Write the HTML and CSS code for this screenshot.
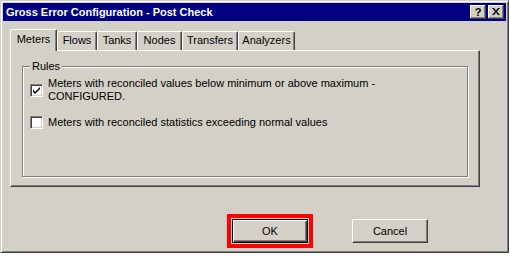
FILE: index.html
```html
<!DOCTYPE html>
<html>
<head>
<meta charset="utf-8">
<link rel="stylesheet" href="styles.css">
</head>
<body>
<div class="window">
  <div class="titlebar">
    <span class="title">Gross Error Configuration - Post Check</span>
    <div class="tbtns">
      <span class="tbtn help">?</span>
      <span class="tbtn close"><svg width="8" height="7" viewBox="0 0 8 7"><path d="M0 0h2l2 2.5L6 0h2L5 3.5 8 7H6L4 4.5 2 7H0l3-3.5z" fill="#000"/></svg></span>
    </div>
  </div>
  <div class="content">
    <div class="tabs">
      <div class="tab sel w-meters">Meters</div>
      <div class="tab w-flows">Flows</div>
      <div class="tab w-tanks">Tanks</div>
      <div class="tab w-nodes">Nodes</div>
      <div class="tab w-transfers">Transfers</div>
      <div class="tab w-analyzers">Analyzers</div>
    </div>
    <div class="panel">
      <div class="group">
        <span class="legend">Rules</span>
        <div class="row row1">
          <span class="cb"><svg width="7" height="7" viewBox="0 0 7 7"><path d="M0 2v3l2 2L7 2V-0L2 5z" fill="#000"/></svg></span>
          <span class="lbl">Meters with reconciled values below minimum or above maximum -<br>CONFIGURED.</span>
        </div>
        <div class="row row2">
          <span class="cb"></span>
          <span class="lbl">Meters with reconciled statistics exceeding normal values</span>
        </div>
      </div>
    </div>
    <div class="buttons">
      <div class="focus"><button class="btn default">OK</button></div>
      <button class="btn">Cancel</button>
    </div>
  </div>
</div>
</body>
</html>
```
FILE: styles.css
```css
html, body {
  margin: 0;
  padding: 0;
  background: #ffffff;
}
body {
  font-family: "Liberation Sans", Arial, sans-serif;
  font-size: 11px;
  color: #000;
}
.window {
  width: 509px;
  height: 253px;
  box-sizing: border-box;
  background: #d4d0c8;
  border: 1px solid;
  border-color: #d4d0c8 #404040 #404040 #d4d0c8;
  box-shadow: inset 1px 1px #ffffff, inset -1px -1px #808080;
  padding: 2px;
  display: flex;
  flex-direction: column;
}
.titlebar {
  height: 18px;
  background: #000080;
  display: flex;
  align-items: center;
  justify-content: space-between;
}
.title {
  color: #fff;
  font-weight: bold;
  font-size: 11px;
  padding-left: 3px;
  line-height: 18px;
}
.tbtns {
  display: flex;
  gap: 2px;
  padding-right: 2px;
}
.tbtn {
  width: 16px;
  height: 14px;
  box-sizing: border-box;
  background: #d4d0c8;
  box-shadow: inset -1px -1px #404040, inset 1px 1px #ffffff, inset -2px -2px #808080;
  display: flex;
  align-items: center;
  justify-content: center;
  font-weight: bold;
  font-size: 11px;
  line-height: 14px;
}
.help {
  padding-bottom: 1px;
}
.close svg {
  display: block;
  margin-top: -1px;
}
.content {
  flex: 1;
  display: flex;
  flex-direction: column;
  padding: 8px 0 0 7px;
}
.tabs {
  display: flex;
  align-items: flex-end;
  height: 22px;
  position: relative;
  z-index: 1;
  margin-bottom: -1px;
}
.tab {
  height: 19px;
  box-sizing: border-box;
  border-top: 1px solid #fff;
  border-left: 1px solid #fff;
  border-right: 1px solid #404040;
  box-shadow: inset -1px 0 #808080;
  border-radius: 2px 2px 0 0;
  text-align: center;
  line-height: 17px;
  background: #d4d0c8;
  margin-bottom: 1px;
}
.tab.sel {
  height: 22px;
  margin-bottom: 0;
  line-height: 19px;
}
.w-meters { width: 47px; }
.w-flows { width: 40px; }
.w-tanks { width: 40px; }
.w-nodes { width: 45px; }
.w-transfers { width: 56px; }
.w-analyzers { width: 57px; }
.panel {
  width: 470px;
  height: 137px;
  box-sizing: border-box;
  border: 1px solid;
  border-color: #fff #404040 #404040 #fff;
  box-shadow: inset -1px -1px #808080;
  display: flex;
  flex-direction: column;
}
.group {
  position: relative;
  margin: 15px 11px 9px 11px;
  flex: 1;
  border: 1px solid #808080;
  box-shadow: inset 1px 1px #fff, 1px 1px #fff;
  padding: 10px 0 0 7px;
}
.legend {
  position: absolute;
  left: 7px;
  top: -8px;
  padding: 0 2px;
  background: #d4d0c8;
  line-height: 14px;
}
.row {
  display: flex;
  align-items: center;
  gap: 5px;
}
.row2 {
  margin-top: 13px;
}
.lbl {
  line-height: 13px;
}
.cb {
  width: 13px;
  height: 13px;
  box-sizing: border-box;
  background: #fff;
  border: 1px solid;
  border-color: #808080 #fff #fff #808080;
  box-shadow: inset 1px 1px #404040, inset -1px -1px #d4d0c8;
  display: flex;
  align-items: center;
  justify-content: center;
  flex: none;
}
.cb svg {
  display: block;
}
.buttons {
  display: flex;
  align-items: center;
  margin-top: 27px;
  padding-left: 217px;
}
.focus {
  border: 4px solid #ff0000;
  padding: 1px;
  margin-right: 39px;
}
.btn {
  width: 76px;
  height: 24px;
  box-sizing: border-box;
  font-family: "Liberation Sans", Arial, sans-serif;
  font-size: 11px;
  color: #000;
  background: #d4d0c8;
  border: 1px solid;
  border-color: #fff #404040 #404040 #fff;
  box-shadow: inset -1px -1px #808080;
  padding: 0;
  margin: 0;
  display: block;
}
.btn.default {
  border: 1px solid #000;
  box-shadow: inset 1px 1px #fff, inset -1px -1px #404040, inset -2px -2px #808080;
}
```
